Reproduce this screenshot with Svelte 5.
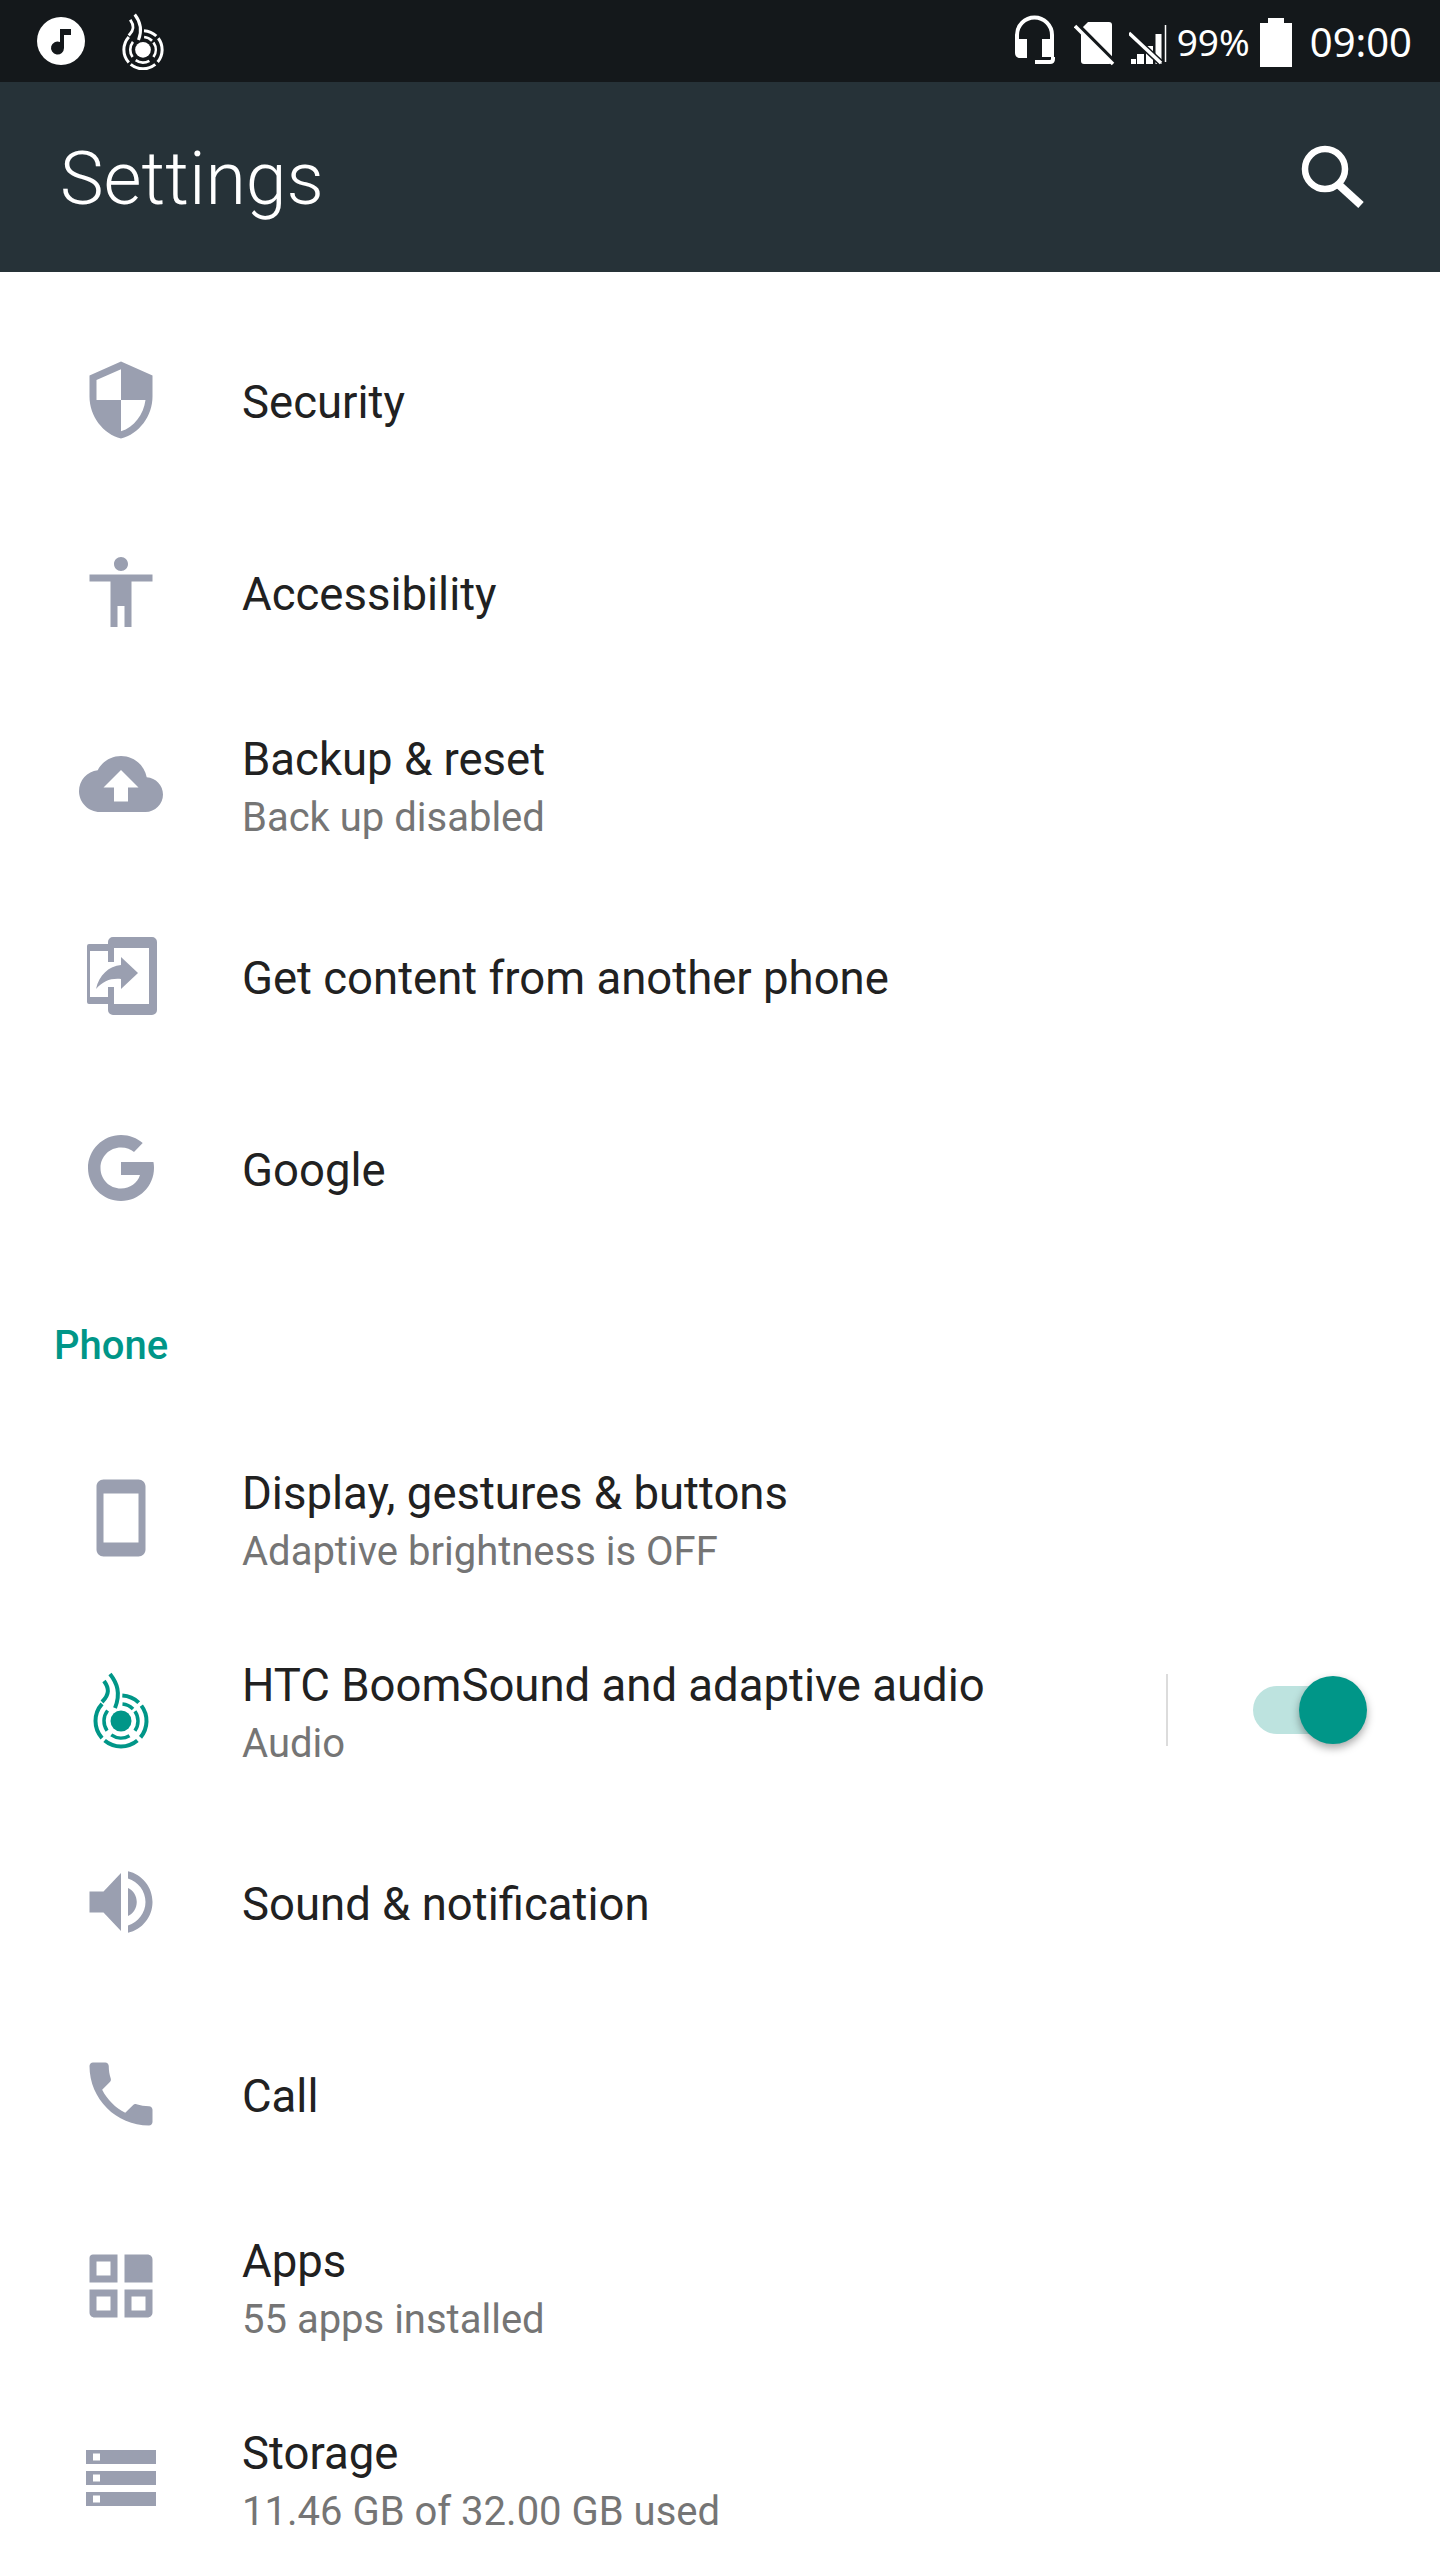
<script>
  const PI = Math.PI

  function arc(r, from, to) {
    // angles in degrees, clockwise from 12 o'clock
    const a = ((from - 90) * PI) / 180
    const b = ((to - 90) * PI) / 180
    const x1 = (r * Math.cos(a)).toFixed(2)
    const y1 = (r * Math.sin(a)).toFixed(2)
    const x2 = (r * Math.cos(b)).toFixed(2)
    const y2 = (r * Math.sin(b)).toFixed(2)
    return `M${x1} ${y1}A${r} ${r} 0 ${to - from > 180 ? 1 : 0} 1 ${x2} ${y2}`
  }

  const boomOuter = [arc(25.5, 3, 44), arc(25.5, 53, 130), arc(25.5, 140, 220), arc(25.5, 228, 312)].join('')
  const boomInner = [arc(17, 5, 45), arc(17, 55, 125), arc(17, 150, 215), arc(17, 235, 308)].join('')

  const icons = {
    security: 'M12 1L3 5v6c0 5.55 3.84 10.74 9 12 5.16-1.26 9-6.45 9-12V5l-9-4zm0 10.99h7c-.53 4.12-3.28 7.79-7 8.94V12H5V6.3l7-3.11v8.8z',
    accessibility: 'M12 2c1.1 0 2 .9 2 2s-.9 2-2 2-2-.9-2-2 .9-2 2-2zm9 7h-6v13h-2v-6h-2v6H9V9H3V7h18v2z',
    backup: 'M19.35 10.04C18.67 6.59 15.64 4 12 4 9.11 4 6.6 5.64 5.35 8.04 2.34 8.36 0 10.91 0 14c0 3.31 2.69 6 6 6h13c2.76 0 5-2.24 5-5 0-2.64-2.05-4.78-4.65-4.96zM14 13v4h-4v-4H7l5-5 5 5h-3z',
    phone: 'M17 1.01L7 1c-1.1 0-2 .9-2 2v18c0 1.1.9 2 2 2h10c1.1 0 2-.9 2-2V3c0-1.1-.9-1.99-2-1.99zM17 19H7V5h10v14z',
    sound: 'M3 9h4l5-5.3v16.6l-5-5.3H3zM14 8c1.5.7 2.5 2.2 2.5 4s-1 3.3-2.5 4zM14 3.2c4 .9 7 4.5 7 8.8s-3 7.9-7 8.8v-2.1c2.9-.9 5-3.6 5-6.7s-2.1-5.8-5-6.7z',
    call: 'M6.62 10.79c1.44 2.83 3.76 5.14 6.59 6.59l2.2-2.2c.27-.27.67-.36 1.02-.24 1.12.37 2.33.57 3.57.57.55 0 1 .45 1 1V20c0 .55-.45 1-1 1-9.39 0-17-7.61-17-17 0-.55.45-1 1-1h3.5c.55 0 1 .45 1 1 0 1.25.2 2.45.57 3.57.11.35.03.74-.25 1.02l-2.2 2.2z',
    apps: 'M4 3h7v8H3V4c0-.6.4-1 1-1zm1 2v4h4V5zM13 3h6.5C20.4 3 21 3.6 21 4.5V11h-8zM3 13h8v8H4.500C3.600 21 3 20.400 3 19.500zm2 2v4h4v-4zM13 13h8v6.500c0 .9-.6 1.500-1.500 1.500H13zm2 2v4h4v-4z',
    storage: 'M2 20h20v-4H2v4zm2-3h2v2H4v-2zM2 4v4h20V4H2zm4 3H4V5h2v2zm-4 7h20v-4H2v4zm2-3h2v2H4v-2z',
    // these two are traced on an 84 unit grid
    transfer: 'M34 3H73a5 5 0 0 1 5 5V76a5 5 0 0 1-5 5H34a5 5 0 0 1-5-5V70H10a2 2 0 0 1-2-2V12a2 2 0 0 1 2-2H29V8a5 5 0 0 1 5-5zM11 17V63H29V53H35V70H70V14H35V28H29V17zM42 23L59 39 42 55V45C32 44 24 47 17 55 20 41 30 32 42 31z',
    google: 'M63.7 17C58 12 50.5 9 42 9 23.8 9 9 23.800 9 42S23.800 75 42 75 75 60.200 75 42C75 39.500 74.800 37.500 74.400 36H42V49H61C58.500 57 51 62.500 42 62.500 30.500 62.500 21.500 53.500 21.500 42S30.500 21.500 42 21.500C47.500 21.500 52 23.300 55 26z'
  }

  const grid84 = ['transfer', 'google']

  const top = [
    { icon: 'security', title: 'Security' },
    { icon: 'accessibility', title: 'Accessibility' },
    { icon: 'backup', title: 'Backup & reset', sub: 'Back up disabled' },
    { icon: 'transfer', title: 'Get content from another phone' },
    { icon: 'google', title: 'Google' }
  ]

  const phone = [
    { icon: 'phone', title: 'Display, gestures & buttons', sub: 'Adaptive brightness is OFF' },
    { boom: true, title: 'HTC BoomSound and adaptive audio', sub: 'Audio', toggle: true },
    { icon: 'sound', title: 'Sound & notification' },
    { icon: 'call', title: 'Call' },
    { icon: 'apps', title: 'Apps', sub: '55 apps installed' },
    { icon: 'storage', title: 'Storage', sub: '11.46 GB of 32.00 GB used' }
  ]
</script>

{#snippet boomMark(color)}
  <g fill="none" stroke={color}>
    <path d={boomOuter} stroke-width="4" transform="translate(42 53)" />
    <path d={boomInner} stroke-width="3.500" transform="translate(42 53)" />
    <path d="M31 6c7 9 11 19 5 34" stroke-width="4" />
    <path d="M25 13c5 7 6 13-2 21" stroke-width="4" />
  </g>
  <circle cx="42" cy="53" r="10.500" fill={color} />
{/snippet}

{#snippet row(item)}
  <div class="row">
    <div class="icon">
      {#if item.boom}
        <svg width="84" height="84" viewBox="0 0 84 84">{@render boomMark('#009688')}</svg>
      {:else}
        <svg width="84" height="84" viewBox={grid84.includes(item.icon) ? '0 0 84 84' : '0 0 24 24'}>
          <path fill="#9a9fb0" fill-rule="evenodd" d={icons[item.icon]} />
        </svg>
      {/if}
    </div>
    <div class="text" class:two={item.sub}>
      <div class="title">{item.title}</div>
      {#if item.sub}<div class="sub">{item.sub}</div>{/if}
    </div>
    {#if item.toggle}
      <div class="divider"></div>
      <div class="toggle"><span class="track"></span><span class="thumb"></span></div>
    {/if}
  </div>
{/snippet}

<div class="page">
  <div class="status">
    <svg class="note" width="48" height="48" viewBox="0 0 48 48">
      <circle cx="24" cy="24" r="24" fill="#fff" />
      <path d="M23 12h11v6h-7v13a6.500 6.500 0 1 1-4-6z" fill="#14181b" />
    </svg>
    <svg class="boom" width="42" height="57" viewBox="14 4 56 76">{@render boomMark('#fff')}</svg>
    <div class="spacer"></div>
    <svg class="headset" width="41" height="50" viewBox="0 0 41 50">
      <path d="M3 28V20a17.500 17.500 0 0 1 35 0v8" fill="none" stroke="#fff" stroke-width="4" />
      <path d="M1 24h12v19H6c-3 0-5-2-5-5zM28 24h12v18h-12z" fill="#fff" />
      <path d="M39 42v2c0 2-1 3-3 3H21" fill="none" stroke="#fff" stroke-width="4" />
    </svg>
    <svg class="sim" width="42" height="44" viewBox="0 0 42 44">
      <path d="M14 0h21c2 0 3 1 3 3v36c0 2-1 3-3 3H10c-2 0-3-1-3-3V7z" fill="#fff" />
      <path d="M3.500 2.500l38 38" stroke="#14181b" stroke-width="4" />
      <path d="M1 4l38 38" stroke="#fff" stroke-width="3.500" />
    </svg>
    <svg class="signal" width="38" height="40" viewBox="0 0 38 40">
      <path d="M36.500 0v37" stroke="#fff" stroke-width="1.500" />
      <path d="M2 34h5v5H2zM8 29h7v10H8zM17 21h7v18h-7zM26.500 9h6v30h-6z" fill="#fff" />
      <path d="M0 8l32 30" stroke="#14181b" stroke-width="6.500" />
      <path d="M0 8l32 30" stroke="#fff" stroke-width="3.500" />
    </svg>
    <span class="pct">99%</span>
    <svg class="battery" width="32" height="49" viewBox="0 0 32 49">
      <path d="M8 0h16v5h8v44H0V5h8z" fill="#fff" />
    </svg>
    <span class="clock">09:00</span>
  </div>

  <header class="appbar">
    <h1>Settings</h1>
    <svg width="64" height="64" viewBox="0 0 64 64">
      <circle cx="25" cy="24" r="20" fill="none" stroke="#fff" stroke-width="6.500" />
      <path d="M38 39l23 21" stroke="#fff" stroke-width="8" />
    </svg>
  </header>

  <main class="list">
    {#each top as item}
      {@render row(item)}
    {/each}
    <div class="section">Phone</div>
    {#each phone as item}
      {@render row(item)}
    {/each}
  </main>
</div>

<style>
  :global(body) {
    margin: 0;
    background: #fff;
  }

  .page {
    width: 1440px;
    height: 2560px;
    overflow: hidden;
    background: #fff;
    font-family: Roboto, sans-serif;
  }

  .status {
    height: 82px;
    background: #14181b;
    display: flex;
    align-items: center;
    color: #fff;
    padding: 0 28px 0 37px;
    box-sizing: border-box;
    font-family: 'Noto Sans', sans-serif;
  }

  .note {
    flex: none;
  }

  .boom {
    flex: none;
    margin-left: 37px;
    margin-top: 1px;
  }

  .spacer {
    flex: 1;
  }

  .headset {
    flex: none;
    margin-right: 19px;
    margin-top: -2px;
  }

  .sim {
    flex: none;
    margin-right: 13px;
    margin-top: 6px;
  }

  .signal {
    flex: none;
    margin-right: 10px;
    margin-top: 8px;
  }

  .pct {
    font-size: 37px;
    margin-right: 10px;
  }

  .battery {
    flex: none;
    margin-right: 18px;
    margin-top: 2px;
  }

  .clock {
    font-size: 40px;
  }

  .appbar {
    height: 190px;
    background: #263238;
    display: flex;
    align-items: center;
    justify-content: space-between;
    padding: 0 76px 0 60px;
    box-sizing: border-box;
  }

  .appbar h1 {
    margin: 4px 0 0;
    color: #fff;
    font-size: 73.5px;
    font-weight: 300;
  }

  .list {
    padding-top: 34px;
  }

  .row {
    height: 192px;
    display: flex;
    align-items: center;
  }

  .icon {
    width: 242px;
    flex: none;
    display: flex;
    padding: 0 0 4px 79px;
    box-sizing: border-box;
  }

  .icon svg {
    display: block;
  }

  .text {
    flex: 1;
    padding-top: 2px;
  }

  .text.two {
    padding-top: 5px;
  }

  .title {
    font-size: 45.5px;
    color: #212121;
    line-height: 58px;
  }

  .sub {
    font-size: 40px;
    color: #757575;
    line-height: 56px;
    margin-top: 1px;
  }

  .section {
    height: 158px;
    display: flex;
    align-items: center;
    padding-left: 54px;
    font-size: 40px;
    font-weight: 500;
    color: #009688;
  }

  .divider {
    width: 2px;
    height: 72px;
    background: #dcdcdc;
    flex: none;
    margin-top: -4px;
  }

  .toggle {
    position: relative;
    width: 114px;
    height: 68px;
    margin: -4px 73px 0 85px;
    flex: none;
  }

  .track {
    position: absolute;
    left: 0;
    right: 22px;
    top: 10px;
    height: 48px;
    border-radius: 24px;
    background: #bde3df;
  }

  .thumb {
    position: absolute;
    left: 46px;
    top: 0;
    width: 68px;
    height: 68px;
    border-radius: 50%;
    background: #009688;
    box-shadow: 0 4px 8px rgba(0, 0, 0, 0.35);
  }
</style>
